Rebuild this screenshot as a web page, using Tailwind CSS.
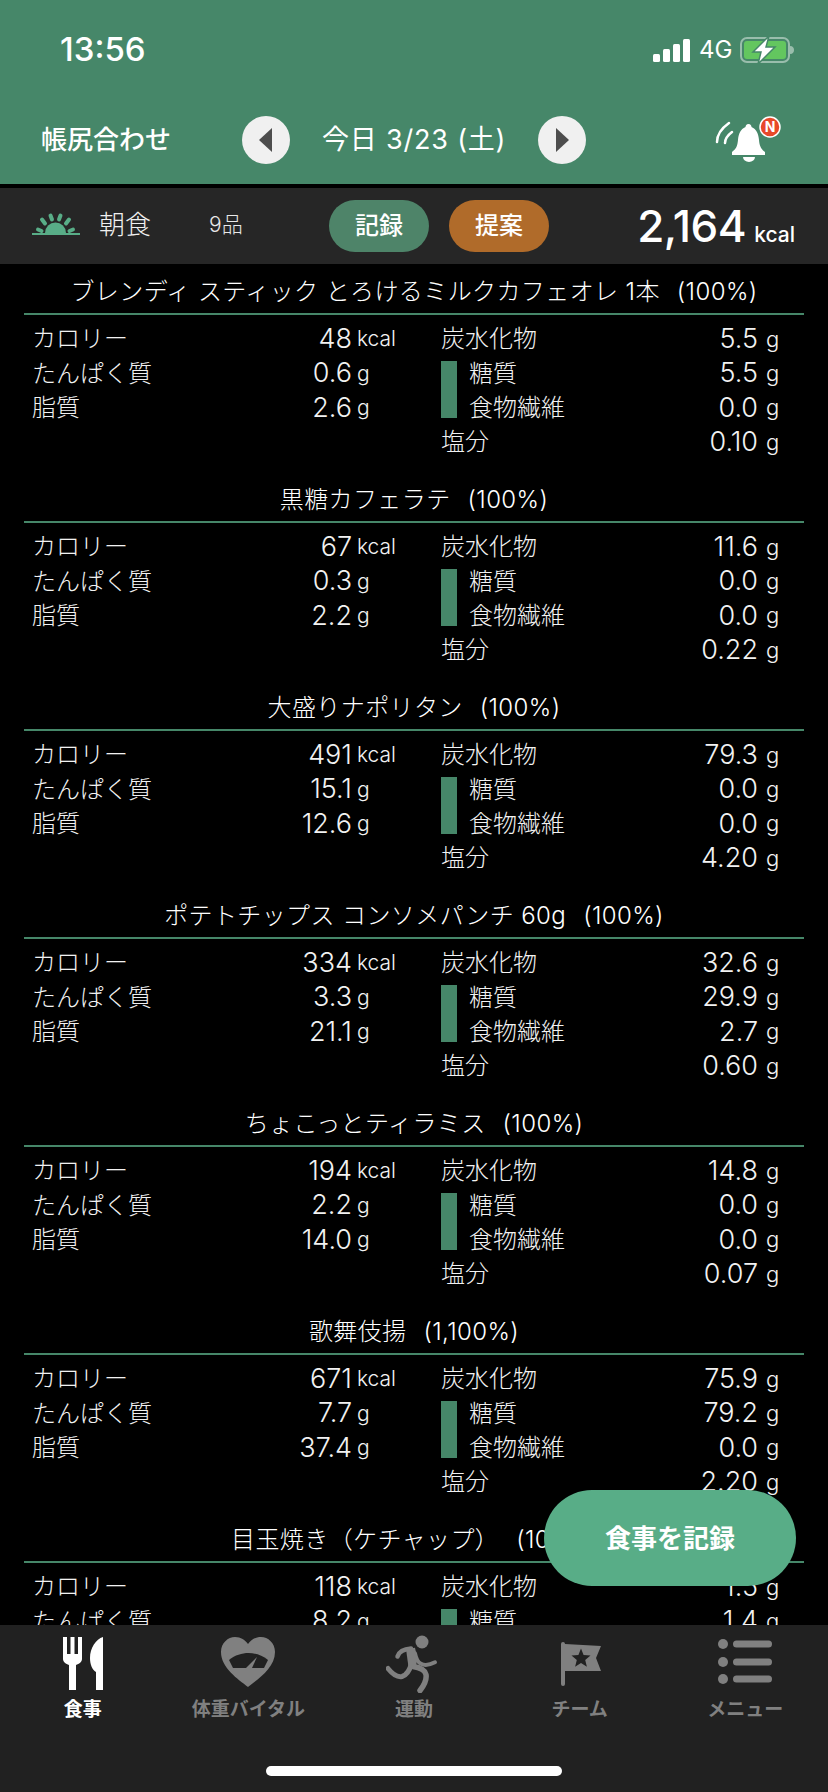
<!DOCTYPE html>
<html lang="ja">
<head>
<meta charset="utf-8">
<script src="https://cdn.jsdelivr.net/npm/@tailwindcss/browser@4"></script>
</head>
<body class="bg-black">
<div class="relative w-[828px] h-[1792px] overflow-hidden bg-black text-white flex flex-col font-['Inter','Noto_Sans_CJK_JP',sans-serif]">
  <header class="h-[184px] shrink-0 bg-[#468769] flex flex-col">
    <div class="h-[100px] flex items-center justify-between pl-[60px] pr-[34px]">
      <span class="text-[33px] font-medium">13:56</span>
      <div class="flex items-center gap-[9px]">
        <svg width="37" height="23" viewBox="0 0 37 23" fill="#fff"><rect x="0" y="15" width="7" height="8" rx="1.5"/><rect x="10" y="10" width="7" height="13" rx="1.5"/><rect x="20" y="5" width="7" height="18" rx="1.5"/><rect x="30" y="0" width="7" height="23" rx="1.5"/></svg>
        <span class="text-[24px] w-[32px] font-normal">4G</span>
        <svg width="54" height="28" viewBox="0 0 54 28"><rect x="1" y="2" width="48" height="24" rx="6" fill="none" stroke="#fff" stroke-opacity=".45" stroke-width="2"/><rect x="4" y="5" width="42" height="18" rx="3" fill="#63c65f"/><path d="M50 10c3 0 4 2 4 4s-1 4-4 4z" fill="#fff" fill-opacity=".45"/><path d="M29 0 13 16h8l-3 12 17-17h-9z" fill="#fff" stroke="#468769" stroke-width="1.5"/></svg>
      </div>
    </div>
    <div class="relative flex-1">
      <span class="absolute left-[41px] top-[22px] text-[26px] font-medium leading-[36px]">帳尻合わせ</span>
      <div class="absolute left-[242px] top-[16px] w-[48px] h-[48px] rounded-full bg-[#f0f0f0] flex items-center justify-center"><svg width="14" height="24" viewBox="0 0 14 24"><path d="M13 0v24L0 12z" fill="#4d4d4d"/></svg></div>
      <span class="absolute left-[322px] top-[22px] text-[27px] tracking-[0.8px] leading-[36px]">今日 3/23 (土)</span>
      <div class="absolute left-[538px] top-[16px] w-[48px] h-[48px] rounded-full bg-[#f0f0f0] flex items-center justify-center"><svg width="14" height="24" viewBox="0 0 14 24"><path d="M1 0v24L14 12z" fill="#4d4d4d"/></svg></div>
      <svg class="absolute left-[714px] top-[14px]" width="68" height="52" viewBox="0 0 68 52"><path d="M15 9C8 14 3 20 3 28M18 18C14 21 11 25 11 29" fill="none" stroke="#fff" stroke-width="2.500" stroke-linecap="round"/><path d="M34.500 10c2 0 3 1.500 3 3 5 2 7 7 7.500 13 .5 6 2 9 6 12v3H18v-3c4-3 5.500-6 6-12 .5-6 2.500-11 7.500-13 0-1.500 1-3 3-3z" fill="#fff"/><path d="M29 43h12a6 5 0 0 1-12 0z" fill="#fff"/><circle cx="56" cy="13" r="10" fill="#e8492a" stroke="#fff" stroke-width="1.500"/><text x="56" y="18" text-anchor="middle" font-size="14" font-weight="700" fill="#fff">N</text></svg>
    </div>
  </header>
  <div class="h-[4px] bg-black shrink-0"></div>
  <section class="h-[76px] shrink-0 bg-[#262626] relative">
    <svg class="absolute left-[32px] top-[22px]" width="48" height="28" viewBox="0 0 48 28"><g fill="#58ad87"><rect x="0" y="23" width="48" height="2"/><path d="M13 23a10.500 10.500 0 0 1 21 0z"/></g><g stroke="#58ad87" stroke-width="4" stroke-linecap="round"><path d="M6 19.500l3.500 1.500M10 9.500l3 4M18.500 5.500l1.500 4M28.500 5.500l-1.500 4M37 9.500l-3 4M41 19.500l-3.500 1.500"/></g></svg>
    <span class="absolute left-[99px] top-[18px] text-[26px] leading-[38px] text-[#f0f0f0] font-light">朝食</span>
    <span class="absolute left-[209px] top-[23px] text-[21px] leading-[28px] text-[#e8e8e8] font-light">9品</span>
    <div class="absolute left-[329px] top-[12px] w-[100px] h-[52px] rounded-[26px] bg-[#4e8469] flex items-center justify-center text-[24px] font-medium">記録</div>
    <div class="absolute left-[449px] top-[12px] w-[100px] h-[52px] rounded-[26px] bg-[#b06b2a] flex items-center justify-center text-[24px] font-medium">提案</div>
    <div class="absolute right-[33px] top-[10px] flex items-baseline gap-[8px]"><span class="text-[44px] font-medium leading-[56px] tracking-[-0.5px]">2,164</span><span class="text-[21px] font-medium">kcal</span></div>
  </section>
  <main id="list" class="flex-1 overflow-hidden px-[24px] font-light"></main>
  <nav class="h-[167px] shrink-0 bg-[#212121] grid grid-cols-5 items-start pt-[10px] text-[19px] font-bold text-[#808080]">
    <div class="flex flex-col items-center text-white">
      <svg class="h-[58px]" width="44" height="58" viewBox="0 0 44 58" fill="#fff"><path d="M2 2h4v17h3.500V2h4v17H17V2h4v22c0 3-3 5-6 6v25H8V30c-3-1-6-3-6-6z"/><path d="M42 2v53h-7V37c-4-2-6-8-6-14 0-10 6-19 13-21z"/></svg>
      <span class="mt-[4px] leading-[26px]">食事</span>
    </div>
    <div class="flex flex-col items-center">
      <svg class="h-[58px]" width="56" height="58" viewBox="0 0 56 58"><path d="M28 52C18 44 1 33 1 17 1 8 8 2 15 2c6 0 10 3 13 7 3-4 7-7 13-7 7 0 14 6 14 15 0 16-17 27-27 35z" fill="#808080"/><path d="M13 33L9 25C15 20 22 18 28.500 18S42 20 48 25L44 33z" fill="#212121"/><path d="M26 33l11-11-5 11z" fill="#808080"/></svg>
      <span class="mt-[4px] leading-[26px]">体重バイタル</span>
    </div>
    <div class="flex flex-col items-center">
      <svg class="h-[58px]" width="56" height="58" viewBox="0 0 56 58"><circle cx="36" cy="7" r="6.500" fill="#808080"/><path d="M20 14l9-1.300 2.300 10.600-1.600 10.700-7.400-3.300z" fill="#808080"/><g fill="none" stroke="#808080" stroke-linecap="round" stroke-linejoin="round"><path d="M11.500 21.500C13 17 17 14 25 13.500" stroke-width="4.500"/><path d="M29 18.300c1 5 3 9 6 10.500 4 2 9 1 14-1.500" stroke-width="4"/><path d="M27 31.500c7 1 12 3 13 8 1 6-2 11-6 16" stroke-width="5.500"/><path d="M25.500 28.500C24 34 21 40 16 41.500c-5 1-10-3-14-8" stroke-width="5"/></g></svg>
      <span class="mt-[4px] leading-[26px]">運動</span>
    </div>
    <div class="flex flex-col items-center">
      <svg class="h-[58px]" width="44" height="58" viewBox="0 0 44 58"><rect x="3" y="7" width="4" height="44" rx="2" fill="#808080"/><path d="M7 9l36 2-5 12 5 13H7z" fill="#808080"/><path d="M23 13.500l2.600 6.500 6.900.5-5.300 4.500 1.700 6.800-5.900-3.700-5.900 3.700 1.700-6.800-5.300-4.500 6.900-.5z" fill="#212121"/></svg>
      <span class="mt-[4px] leading-[26px]">チーム</span>
    </div>
    <div class="flex flex-col items-center">
      <svg class="h-[58px]" width="54" height="58" viewBox="0 0 54 58" fill="#808080"><circle cx="5" cy="9" r="5"/><circle cx="5" cy="27" r="5"/><circle cx="5" cy="44" r="5"/><rect x="15" y="5.500" width="39" height="7" rx="3.500"/><rect x="15" y="23.500" width="39" height="7" rx="3.500"/><rect x="15" y="40.500" width="39" height="7" rx="3.500"/></svg>
      <span class="mt-[4px] leading-[26px]">メニュー</span>
    </div>
  </nav>
  <div class="absolute left-[266px] top-[1766px] w-[296px] h-[10px] rounded-full bg-white"></div>
  <button class="absolute left-[544px] top-[1490px] w-[252px] h-[96px] rounded-[48px] bg-[#58ad87] text-white text-[26px] font-bold flex items-center justify-center">食事を記録</button>
</div>
<script>
const data = [
 ["ブレンディ スティック とろけるミルクカフェオレ 1本","100%","48","0.6","2.6","5.5","5.5","0.0","0.10"],
 ["黒糖カフェラテ","100%","67","0.3","2.2","11.6","0.0","0.0","0.22"],
 ["大盛りナポリタン","100%","491","15.1","12.6","79.3","0.0","0.0","4.20"],
 ["ポテトチップス コンソメパンチ 60g","100%","334","3.3","21.1","32.6","29.9","2.7","0.60"],
 ["ちょこっとティラミス","100%","194","2.2","14.0","14.8","0.0","0.0","0.07"],
 ["歌舞伎揚","1,100%","671","7.7","37.4","75.9","79.2","0.0","2.20"],
 ["目玉焼き（ケチャップ）","100%","118","8.2","","1.5","1.4","",""]
];
const left = (label, num, unit) => `<div class="h-[34.4px] flex items-center"><span class="flex-1">${label}</span><span class="text-[27px]">${num}</span><span class="w-[38px] ml-[5px] text-[21px]">${unit}</span></div>`;
const right = (label, num) => `<div class="h-[34.4px] flex items-center"><span class="flex-1">${label}</span><span class="text-[27px]">${num}</span><span class="w-[30px] ml-[8px] text-[22px]">g</span></div>`;
document.getElementById("list").innerHTML = data.map(d => `
<article class="h-[208px]">
  <h2 class="h-[51px] pt-[7px] flex items-center justify-center text-[24px] tracking-[0.4px] leading-[32px] font-light whitespace-pre border-b-2 border-[#468769]">${d[0]}<span class="ml-[17px]">(${d[1]})</span></h2>
  <div class="flex pl-[8px] pr-[8px] pt-[7px] text-[24px] text-[#f2f2f2]">
    <div class="w-[363px]">${left("カロリー",d[2],"kcal")}${left("たんぱく質",d[3],"g")}${left("脂質",d[4],"g")}</div>
    <div class="relative ml-[46px] flex-1">${right("炭水化物",d[5])}
      <div class="absolute left-0 top-[39px] w-[16px] h-[57px] bg-[#468769]"></div>
      <div class="pl-[28px]">${right("糖質",d[6])}${right("食物繊維",d[7])}</div>${right("塩分",d[8])}
    </div>
  </div>
</article>`).join("");
</script>
</body>
</html>
